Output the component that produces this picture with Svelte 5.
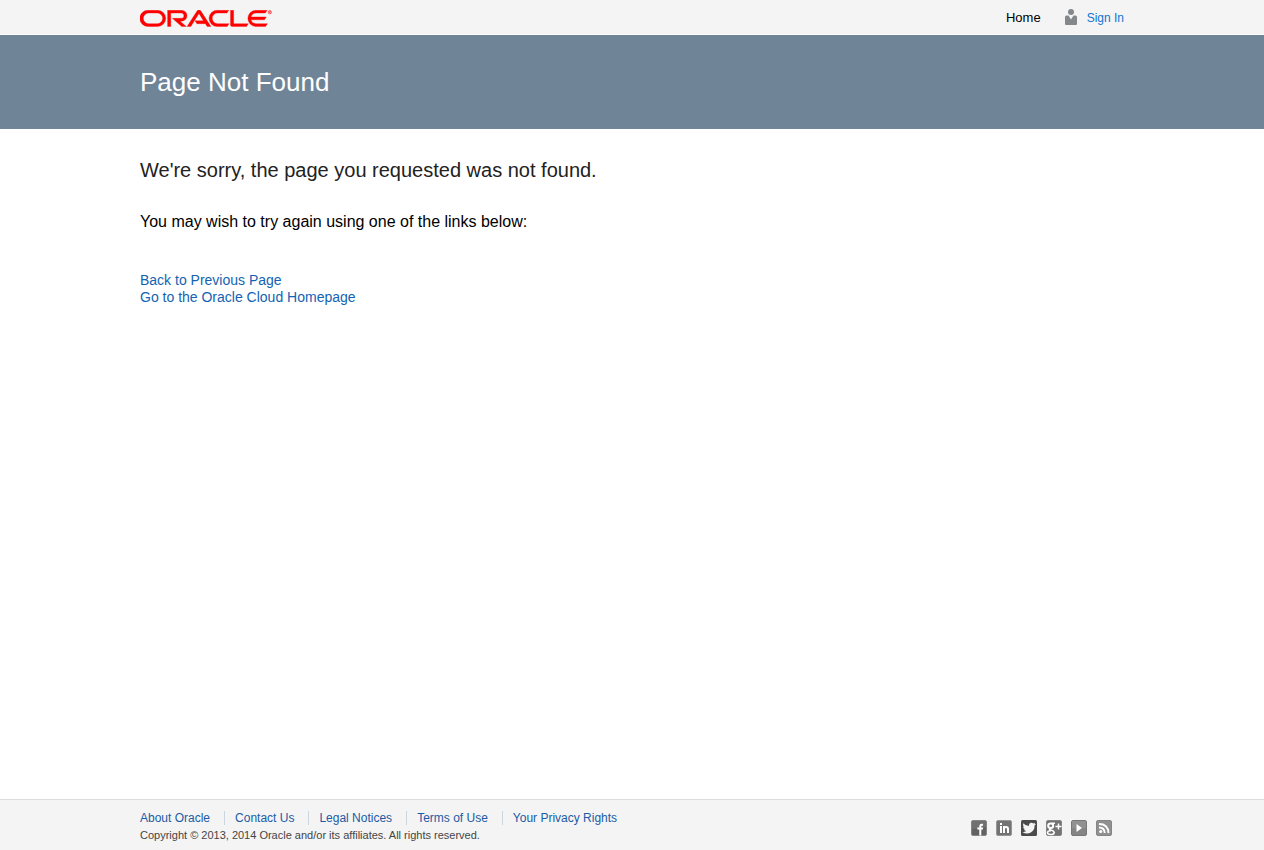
<script>
  const footerLinks = ['About Oracle', 'Contact Us', 'Legal Notices', 'Terms of Use', 'Your Privacy Rights'];
</script>

<div class="page">
  <header>
    <div class="wrap top">
      <a class="logo" href="#home" aria-label="Oracle">
        <svg width="132" height="17" viewBox="0 0 239 30.8" preserveAspectRatio="none" aria-hidden="true">
          <path fill="#f00" stroke="#f00" stroke-width=".6" d="M99.61,19.52h15.24l-8.05-13L92,30H85.27l18-28.17a4.29,4.29,0,0,1,7-.05L128.32,30h-6.73l-3.17-5.25H103l-3.36-5.23m69.93,5.23V0.28h-5.72V27.16a2.76,2.76,0,0,0,.85,2,2.89,2.89,0,0,0,2.08.87h26l3.39-5.25H169.54M75,20.38A10,10,0,0,0,75,.28H50V30h5.71V5.54H74.65a4.81,4.81,0,0,1,0,9.62H58.54L75.6,30h8.29L72.43,20.38H75M14.88,30H32.15a14.86,14.86,0,0,0,0-29.71H14.88a14.86,14.86,0,1,0,0,29.71m16.88-5.23H15.26a9.62,9.62,0,0,1,0-19.23h16.5a9.62,9.62,0,0,1,0,19.23M140.25,30h17.63l3.34-5.23H140.64a9.62,9.62,0,1,1,0-19.23h16.75l3.38-5.25H140.25a14.86,14.86,0,1,0,0,29.71m69.87-5.23a9.62,9.62,0,0,1-9.26-7h24.42l3.36-5.24H200.86a9.61,9.61,0,0,1,9.26-7h16.76l3.35-5.25h-20.5a14.86,14.86,0,0,0,0,29.71h17.63l3.35-5.23h-20.6" />
          <circle cx="235" cy="4" r="3" fill="none" stroke="#f00" stroke-width="1" />
          <path d="M234 6V2.400h1.500a1 1 0 0 1 0 2H234m1.500 0L236.500 6" fill="none" stroke="#f00" stroke-width=".8" />
        </svg>
      </a>
      <nav>
        <a class="home" href="#home">Home</a>
        <a class="signin" href="#signin">
          <svg width="12" height="16" viewBox="0 0 12 16" fill="#84888b" aria-hidden="true">
            <circle cx="6" cy="3" r="3" />
            <path d="M1.500 6.500H3.500L6 10.500 8.500 6.500H10.500Q12 6.500 12 8V15Q12 16 11 16H1Q0 16 0 15V8Q0 6.500 1.500 6.500Z" />
          </svg>
          <span>Sign In</span>
        </a>
      </nav>
    </div>
  </header>

  <div class="band">
    <div class="wrap"><h1>Page Not Found</h1></div>
  </div>

  <main class="wrap">
    <h2>We're sorry, the page you requested was not found.</h2>
    <p>You may wish to try again using one of the links below:</p>
    <ul>
      <li><a href="#back">Back to Previous Page</a></li>
      <li><a href="#cloud">Go to the Oracle Cloud Homepage</a></li>
    </ul>
  </main>

  <footer>
    <div class="wrap bottom">
      <div>
        <ul class="legal">
          {#each footerLinks as label}
            <li><a href="#legal">{label}</a></li>
          {/each}
        </ul>
        <small>Copyright © 2013, 2014 Oracle and/or its affiliates. All rights reserved.</small>
      </div>
      <div class="social">
        <a href="#facebook" aria-label="Facebook">
          <svg viewBox="0 0 16 16">
            <rect x=".5" y=".5" width="15" height="15" rx="1.500" fill="#626262" stroke="#858585" />
            <path d="M1 1H15V7L1 9Z" fill="#717171" />
            <path d="M12 4.700H10.800Q9.300 4.700 9.300 6.200V15.500M6.300 8.600H12" fill="none" stroke="#fff" stroke-width="2" />
          </svg>
        </a>
        <a href="#linkedin" aria-label="LinkedIn">
          <svg viewBox="0 0 16 16">
            <rect x=".5" y=".5" width="15" height="15" rx="1.500" fill="#737373" stroke="#959595" />
            <path d="M5 3V5M5 6V13M8 6V13M8 9Q8 7 10 7T12 9V13" fill="none" stroke="#fff" stroke-width="2" />
          </svg>
        </a>
        <a href="#twitter" aria-label="Twitter">
          <svg viewBox="0 0 16 16">
            <rect width="16" height="16" rx="1.500" fill="#4b4b4b" />
            <path fill="#f4f4f4" d="M2.300 3.200Q4.500 5.900 8 6.100 7.700 3 10.400 2.700 11.500 2.600 12.400 3.500L14.300 2.800 13.500 4.200 15 4 13.600 5.500Q13.600 10 10.200 12.300 6.200 14.700 1.500 12.200 4 12.200 5.300 11.100 3.300 10.800 2.900 9.200H4.100Q2 8.300 2 6.400L3.100 6.700Q1.300 5.200 2.300 3.200Z" />
          </svg>
        </a>
        <a href="#google" aria-label="Google Plus">
          <svg viewBox="0 0 16 16">
            <rect x=".5" y=".5" width="15" height="15" rx="1.500" fill="#737373" stroke="#858585" />
            <ellipse cx="4.700" cy="5.800" rx="2.500" ry="2.300" fill="none" stroke="#fff" stroke-width="2" />
            <path d="M5.500 3.200H9M4.200 8.300Q2.500 9.500 5 10T8.300 12.300Q8 14.500 4.800 14.500T1.500 12.700Q1.600 10.700 5 10.800" fill="none" stroke="#fff" stroke-width="1.500" />
            <path d="M12.500 3.500V9.500M9.500 6.500H15.500" stroke="#fff" stroke-width="1.500" />
          </svg>
        </a>
        <a href="#youtube" aria-label="YouTube">
          <svg viewBox="0 0 16 16">
            <rect x=".5" y=".5" width="15" height="15" rx="1.500" fill="#858585" stroke="#777" />
            <path d="M1 1H15V8H1Z" fill="#919191" />
            <path d="M5.500 4L11 8 5.500 12Z" fill="#fff" />
          </svg>
        </a>
        <a href="#rss" aria-label="RSS">
          <svg viewBox="0 0 16 16">
            <rect x=".5" y=".5" width="15" height="15" rx="1.500" fill="#909090" stroke="#858585" />
            <circle cx="4.700" cy="11.500" r="1.600" fill="#fff" />
            <path d="M3 7.500Q8.500 7.500 8.700 13M3 4Q12 4 12.500 13" fill="none" stroke="#fff" stroke-width="1.900" />
          </svg>
        </a>
      </div>
    </div>
  </footer>
</div>

<style>
  :global(body) {
    margin: 0;
    background: #fff;
    color: #000;
    font-family: "Liberation Sans", Arial, sans-serif;
  }
  .page {
    min-height: 100vh;
    display: flex;
    flex-direction: column;
  }
  .wrap {
    width: 100%;
    max-width: 984px;
    margin: 0 auto;
  }
  a { color: #1363b2; text-decoration: none; }
  a:hover { text-decoration: underline; }
  svg { display: block; }
  ul { list-style: none; margin: 0; padding: 0; }

  header { background: #f4f4f4; border-bottom: 1px solid #fff; }
  .top {
    display: flex;
    justify-content: space-between;
    align-items: center;
    height: 34px;
  }
  .logo { padding-top: 2px; }
  nav { display: flex; align-items: center; gap: 24px; }
  .home { color: #000; font-size: 13px; line-height: 16px; padding-top: 2px; }
  .signin {
    display: flex;
    align-items: center;
    gap: 10px;
    color: #1274d0;
    font-size: 12px;
    line-height: 18px;
  }
  .signin span { padding-top: 2px; }

  .band { background: #708498; color: #fff; }
  h1 { margin: 0; padding: 32px 0; font-size: 26px; line-height: 30px; font-weight: 400; }

  main { flex: 1; }
  h2 { margin: 29px 0 0; font-size: 20px; line-height: 24px; font-weight: 400; color: #222; }
  p { margin: 30px 0 40px; font-size: 16px; line-height: 20px; }
  main li { font-size: 14px; line-height: 17px; }

  footer { background: #f4f4f4; border-top: 1px solid #dcdcdc; }
  .bottom {
    display: flex;
    justify-content: space-between;
    padding: 10px 0 8px;
  }
  .legal { display: flex; font-size: 12px; line-height: 14px; padding-top: 1px; }
  .legal li + li { margin-left: 14px; padding-left: 10px; border-left: 1px solid #ccd6e0; }
  .legal a { color: #1c5ba5; }
  small { display: block; margin-top: 3px; font-size: 11px; line-height: 14px; color: #444; }
  .social { display: flex; gap: 9px; padding: 10px 12px 0 0; }
  .social svg { width: 16px; height: 16px; }
</style>
